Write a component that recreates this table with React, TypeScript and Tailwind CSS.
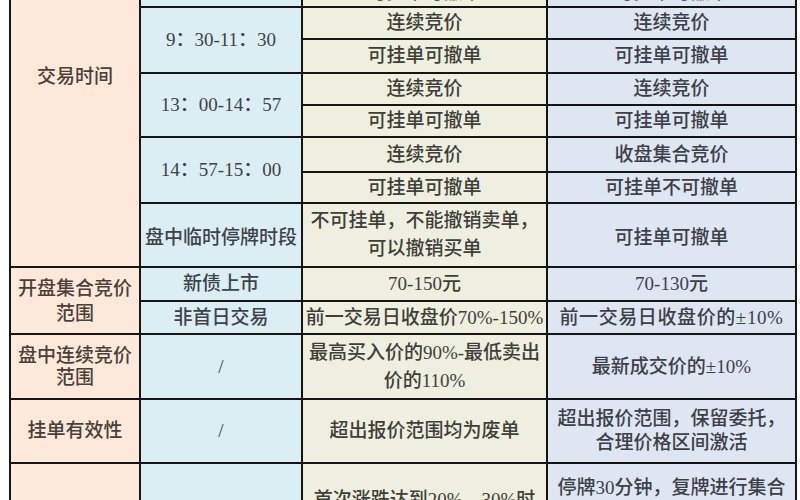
import React from "react";

const C1 = "bg-[#fde9d9] text-[#4a3f3a]";
const C2 = "bg-[#dbeef4] text-[#3d4347]";
const C3 = "bg-[#eeefdf] text-[#3f3f3a]";
const C4 = "bg-[#dde6f1] text-[#3d4048]";
const TD = "border-2 border-[#151515] p-0 text-center align-middle";

function Cell({
  cls,
  h,
  rowSpan,
  children,
  extra = "",
}: {
  cls: string;
  h?: number;
  rowSpan?: number;
  children?: React.ReactNode;
  extra?: string;
}) {
  return (
    <td
      rowSpan={rowSpan}
      className={`${TD} ${cls} ${extra}`}
      style={h ? { height: h } : undefined}
    >
      {children}
    </td>
  );
}

export default function App() {
  return (
    <div
      className="h-[500px] w-[800px] overflow-hidden bg-white pl-[9px]"
      style={{ fontFamily: '"Liberation Serif", "Noto Sans CJK SC", serif' }}
    >
      <table className="mt-[-115px] w-[786px] table-fixed border-collapse text-[19px] font-medium leading-[26px]">
        <colgroup>
          <col className="w-[130px]" />
          <col className="w-[162px]" />
          <col className="w-[245px]" />
          <col className="w-[249px]" />
        </colgroup>
        <tbody>
          {/* rows above the viewport */}
          <tr>
            <Cell cls={C1} rowSpan={15}>
              交易时间
            </Cell>
            <Cell cls={C2} rowSpan={2}>
              9：15-9：20
            </Cell>
            <Cell cls={C3} h={31}>集合竞价</Cell>
            <Cell cls={C4} h={31}>开盘集合竞价</Cell>
          </tr>
          <tr>
            <Cell cls={C3} h={31}>可挂单可撤单</Cell>
            <Cell cls={C4} h={31}>可挂单可撤单</Cell>
          </tr>
          <tr>
            <Cell cls={C2} rowSpan={2}>
              9：20-9：30
            </Cell>
            <Cell cls={C3} h={31}>集合竞价</Cell>
            <Cell cls={C4} h={31}>开盘集合竞价</Cell>
          </tr>
          <tr>
            <Cell cls={C3} h={23}>可挂单可撤单</Cell>
            <Cell cls={C4} h={23}>可挂单可撤单</Cell>
          </tr>

          {/* 9:30-11:30 */}
          <tr>
            <Cell cls={C2} rowSpan={2}>
              9：30-11：30
            </Cell>
            <Cell cls={C3} h={32}>连续竞价</Cell>
            <Cell cls={C4} h={32}>连续竞价</Cell>
          </tr>
          <tr>
            <Cell cls={C3} h={34}>可挂单可撤单</Cell>
            <Cell cls={C4} h={34}>可挂单可撤单</Cell>
          </tr>

          {/* 13:00-14:57 */}
          <tr>
            <Cell cls={C2} rowSpan={2}>
              13：00-14：57
            </Cell>
            <Cell cls={C3} h={32}>连续竞价</Cell>
            <Cell cls={C4} h={32}>连续竞价</Cell>
          </tr>
          <tr>
            <Cell cls={C3} h={32}>可挂单可撤单</Cell>
            <Cell cls={C4} h={32}>可挂单可撤单</Cell>
          </tr>

          {/* 14:57-15:00 */}
          <tr>
            <Cell cls={C2} rowSpan={2}>
              14：57-15：00
            </Cell>
            <Cell cls={C3} h={35}>连续竞价</Cell>
            <Cell cls={C4} h={35}>收盘集合竞价</Cell>
          </tr>
          <tr>
            <Cell cls={C3} h={31}>可挂单可撤单</Cell>
            <Cell cls={C4} h={31}>可挂单不可撤单</Cell>
          </tr>

          {/* 盘中临时停牌时段 */}
          <tr>
            <Cell cls={C2} extra="pt-[6px] whitespace-nowrap">
              盘中临时停牌时段
            </Cell>
            <Cell cls={C3} h={64} extra="leading-[28px]">
              不可挂单，不能撤销卖单，
              <br />
              可以撤销买单
            </Cell>
            <Cell cls={C4} h={64} extra="pt-[6px]">
              可挂单可撤单
            </Cell>
          </tr>
        </tbody>
        <tbody>
          {/* 开盘集合竞价范围 */}
          <tr>
            <Cell cls={C1} rowSpan={2} extra="leading-[25px]">
              开盘集合竞价
              <br />
              范围
            </Cell>
            <Cell cls={C2} h={34}>新债上市</Cell>
            <Cell cls={C3} h={34}>70-150元</Cell>
            <Cell cls={C4} h={34}>70-130元</Cell>
          </tr>
          <tr>
            <Cell cls={C2} h={33}>非首日交易</Cell>
            <Cell cls={C3} h={33} extra="whitespace-nowrap">
              前一交易日收盘价70%-150%
            </Cell>
            <Cell cls={C4} h={33} extra="whitespace-nowrap tracking-[0.6px]">
              前一交易日收盘价的±10%
            </Cell>
          </tr>

          {/* 盘中连续竞价范围 */}
          <tr>
            <Cell cls={C1} h={65} extra="leading-[22px]">
              盘中连续竞价
              <br />
              范围
            </Cell>
            <Cell cls={C2}>/</Cell>
            <Cell cls={C3} extra="leading-[28px]">
              最高买入价的90%-最低卖出
              <br />
              价的110%
            </Cell>
            <Cell cls={C4}>最新成交价的±10%</Cell>
          </tr>

          {/* 挂单有效性 */}
          <tr>
            <Cell cls={C1} h={64}>
              挂单有效性
            </Cell>
            <Cell cls={C2}>/</Cell>
            <Cell cls={C3}>超出报价范围均为废单</Cell>
            <Cell cls={C4} extra="leading-[24px]">
              超出报价范围，保留委托，
              <br />
              合理价格区间激活
            </Cell>
          </tr>

          {/* 临时停牌 */}
          <tr>
            <Cell cls={C1} h={102}>
              盘中临时停牌
            </Cell>
            <Cell cls={C2}>/</Cell>
            <Cell cls={C3} extra="leading-[28px]">
              首次涨跌达到20%、30%时
              <br />
              临时停牌30分钟
            </Cell>
            <Cell cls={C4} extra="whitespace-nowrap">
              停牌30分钟，复牌进行集合
              <br />
              竞价，再继续连续竞价
              <br />
              交易
            </Cell>
          </tr>
        </tbody>
      </table>
    </div>
  );
}
